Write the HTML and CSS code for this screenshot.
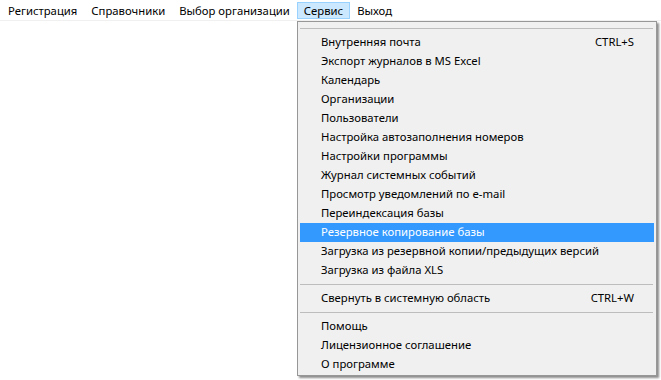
FILE: index.html
```html
<!DOCTYPE html>
<html lang="ru">
<head>
    <meta charset="UTF-8">
    <title>Сервис</title>
    <link rel="stylesheet" href="styles.css">
</head>
<body>
    <div class="menubar">
        <span class="menubar-item">Регистрация</span>
        <span class="menubar-item">Справочники</span>
        <span class="menubar-item">Выбор организации</span>
        <span class="menubar-item open">Сервис</span>
        <span class="menubar-item">Выход</span>
    </div>

    <div class="dropdown">
        <div class="separator"></div>
        <div class="item"><span>Внутренняя почта</span><span class="shortcut">CTRL+S</span></div>
        <div class="item"><span>Экспорт журналов в MS Excel</span></div>
        <div class="item"><span>Календарь</span></div>
        <div class="item"><span>Организации</span></div>
        <div class="item"><span>Пользователи</span></div>
        <div class="item"><span>Настройка автозаполнения номеров</span></div>
        <div class="item"><span>Настройки программы</span></div>
        <div class="item"><span>Журнал системных событий</span></div>
        <div class="item"><span>Просмотр уведомлений по e-mail</span></div>
        <div class="item"><span>Переиндексация базы</span></div>
        <div class="item active"><span>Резервное копирование базы</span></div>
        <div class="item"><span>Загрузка из резервной копии/предыдущих версий</span></div>
        <div class="item"><span>Загрузка из файла XLS</span></div>
        <div class="separator"></div>
        <div class="item"><span>Свернуть в системную область</span><span class="shortcut">CTRL+W</span></div>
        <div class="separator"></div>
        <div class="item"><span>Помощь</span></div>
        <div class="item"><span>Лицензионное соглашение</span></div>
        <div class="item"><span>О программе</span></div>
    </div>
</body>
</html>
```

FILE: styles.css
```css
* {
    margin: 0;
    padding: 0;
    box-sizing: border-box;
}

body {
    font-family: 'Noto Sans', 'Open Sans', sans-serif;
    font-size: 11.3px;
    color: #000;
    background: #fff;
    width: 661px;
    height: 380px;
    overflow: hidden;
}

.menubar {
    display: flex;
    height: 21px;
    padding: 2px 0 0 1px;
    border-bottom: 1px solid #f0f0f0;
}

.menubar-item {
    height: 17px;
    line-height: 15px;
    padding: 0 6px;
    border: 1px solid transparent;
}

.menubar-item.open {
    background: #cce8ff;
    border-color: #99d1ff;
}

.dropdown {
    position: absolute;
    left: 297px;
    top: 21px;
    width: 360px;
    height: 355px;
    padding: 2px 2px;
    background: #f0f0f0;
    border: 1px solid #979797;
    box-shadow: 2px 2px 2px rgba(0, 0, 0, 0.45);
}

.separator {
    height: 9px;
    padding-top: 4px;
}

.separator::after {
    content: '';
    display: block;
    height: 1px;
    margin-right: 1px;
    background: #bdbdbd;
}

.item {
    display: flex;
    justify-content: space-between;
    height: 19px;
    line-height: 18px;
    padding: 0 20px 0 21px;
}

.item.active {
    background: #3399ff;
    color: #fff;
}
```
